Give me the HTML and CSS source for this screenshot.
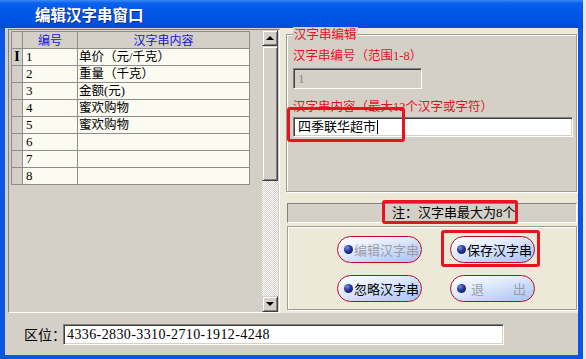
FILE: index.html
```html
<!DOCTYPE html>
<html>
<head>
<meta charset="utf-8">
<link rel="stylesheet" href="styles.css">
</head>
<body>
<div class="window">
  <div class="titlebar"><span class="title">编辑汉字串窗口</span></div>
  <div class="client">
    <div class="top">
      <div class="gridpanel">
        <div class="grid">
          <div class="cell hd"></div><div class="cell hd blue">编号</div><div class="cell hd blue">汉字串内容</div>
          <div class="cell ind"><span class="ibeam">I</span></div><div class="cell num">1</div><div class="cell txt">单价（元/千克）</div>
          <div class="cell ind"></div><div class="cell num">2</div><div class="cell txt">重量（千克）</div>
          <div class="cell ind"></div><div class="cell num">3</div><div class="cell txt">金额(元)</div>
          <div class="cell ind"></div><div class="cell num">4</div><div class="cell txt">蜜欢购物</div>
          <div class="cell ind"></div><div class="cell num">5</div><div class="cell txt">蜜欢购物</div>
          <div class="cell ind"></div><div class="cell num">6</div><div class="cell txt"></div>
          <div class="cell ind"></div><div class="cell num">7</div><div class="cell txt"></div>
          <div class="cell ind"></div><div class="cell num">8</div><div class="cell txt"></div>
        </div>
        <div class="vscroll">
          <div class="sbtn"><span class="arrow-up"></span></div>
          <div class="sbtn thumb"></div>
          <div class="track"></div>
          <div class="sbtn"><span class="arrow-down"></span></div>
        </div>
      </div>
      <div class="right">
        <div class="group">
          <div class="legend">汉字串编辑</div>
          <div class="lbl first">汉字串编号（范围1-8）</div>
          <div class="field disabled">1</div>
          <div class="lbl second">汉字串内容（最大12个汉字或字符）</div>
          <div class="field text">四季联华超市<span class="caret"></span></div>
        </div>
        <div class="note">注：汉字串最大为8个</div>
        <div class="btnpanel">
          <div class="btn off"><span class="ball"></span>编辑汉字串</div>
          <div class="btn"><span class="ball"></span>保存汉字串</div>
          <div class="btn"><span class="ball"></span>忽略汉字串</div>
          <div class="btn off"><span class="ball"></span><span class="t1">退</span><span class="t2">出</span></div>
        </div>
      </div>
    </div>
    <div class="bottom">
      <span class="qlabel">区位：</span>
      <div class="field qinput">4336-2830-3310-2710-1912-4248</div>
    </div>
  </div>
</div>
<div class="mark mark-content"></div>
<div class="mark mark-note"></div>
<div class="mark mark-save"></div>
</body>
</html>
```

FILE: styles.css
```css
* { box-sizing: border-box; }
html, body { margin: 0; padding: 0; }
body {
  width: 586px; height: 359px; overflow: hidden; position: relative;
  background: #ece9d8;
  font-family: "Liberation Serif", "Noto Sans CJK SC", serif;
  font-size: 12px; color: #000;
}
.window {
  width: 583px; height: 359px;
  background: #0a55e6;
  padding: 0 5px 4px 5px;
  display: flex; flex-direction: column;
}
.titlebar {
  height: 28px; margin: 0 -5px; padding-left: 35px;
  background: linear-gradient(#3b8cf8 0px, #0c61ec 3px, #0457e9 10px, #0052e2 22px, #004bd8 28px);
  display: flex; align-items: center;
}
.title {
  color: #fff; font-family: "Noto Sans CJK SC", sans-serif; font-weight: bold;
  font-size: 15.5px; line-height: 18px; text-shadow: 1px 1px #0a2a8a;
}
.client { flex: 1; background: #d4d0c8; display: flex; flex-direction: column; }
.top { height: 285px; display: flex; }

/* grid panel */
.gridpanel {
  margin: 1px 0 0 3px; width: 272px; height: 284px;
  border: 1px solid; border-color: #808080 #fff #fff #808080;
  display: flex; padding: 0 1px 0 2px;
}
.grid {
  margin-top: 1px; align-self: flex-start;
  display: grid; grid-template-columns: 10px 54px 171px; grid-auto-rows: 16px;
  gap: 1px; background: #8e8e8e; border: 1px solid #8e8e8e;
}
.cell { background: #fbfbf2; height: 16px; line-height: 16px; white-space: nowrap; }
.hd, .ind { background: #d4d0c8; }
.blue {
  color: #1515e0; text-align: center;
  font-family: "Noto Sans CJK SC", sans-serif; font-size: 12px; line-height: 16px;
}
.num { padding-left: 3px; font-size: 13px; }
.txt { padding-left: 1px; font-size: 12.5px; line-height: 16px; }
.ibeam { display: block; text-align: center; font-weight: bold; font-size: 14px; line-height: 16px; }

.vscroll { margin-left: auto; width: 16px; display: flex; flex-direction: column; }
.sbtn {
  height: 16px; background: #d4d0c8;
  border: 1px solid; border-color: #d4d0c8 #404040 #404040 #d4d0c8;
  box-shadow: inset 1px 1px #fff, inset -1px -1px #808080;
  display: flex; align-items: center; justify-content: center;
}
.thumb { height: 135px; }
.track {
  flex: 1;
  background: repeating-conic-gradient(#ffffff 0 25%, #d4d0c8 0 50%) 0 0 / 2px 2px;
}
.arrow-up { width: 0; height: 0; border-left: 4px solid transparent; border-right: 4px solid transparent; border-bottom: 4px solid #000; }
.arrow-down { width: 0; height: 0; border-left: 4px solid transparent; border-right: 4px solid transparent; border-top: 4px solid #000; }

/* right side */
.right {
  flex: 1; background: #ece9d8;
  padding: 6px 1px 0 6px;
  display: flex; flex-direction: column;
}
.group {
  height: 158px;
  border: 1px solid #a09c94;
  box-shadow: inset 1px 1px #fff, 1px 1px #fff;
  background: #d4d0c8;
  padding: 0 0 0 6px;
}
.legend {
  margin: -8px 0 0 0; width: fit-content; padding: 0 1px;
  background: #d4d0c8; color: #e8101e; font-size: 12.5px; line-height: 14px;
  font-family: "Noto Sans CJK SC", sans-serif;
}
.lbl { color: #e8101e; font-size: 12.5px; line-height: 14px; white-space: nowrap; }
.lbl.first { margin-top: 8px; }
.lbl.second { margin-top: 11px; }
.field {
  background: #fff;
  border: 1px solid; border-color: #808080 #fff #fff #808080;
  box-shadow: inset 1px 1px #404040, inset -1px -1px #d4d0c8;
  white-space: nowrap;
}
.field.disabled {
  margin-top: 5px; width: 129px; height: 21px; background: #d4d0c8;
  color: #8a8a8a; padding-left: 4px; line-height: 19px; font-size: 13px;
}
.field.text {
  margin-top: 3px; width: 280px; height: 20px;
  padding-left: 4px; line-height: 18px; font-size: 13px;
  display: flex; align-items: center;
}
.caret { display: inline-block; width: 1px; height: 14px; background: #000; margin-left: 1px; }

.note {
  margin: 11px 0 0 1px; width: 290px; height: 20px;
  background: #d4d0c8;
  border: 1px solid; border-color: #808080 #fff #fff #808080;
  padding-left: 104px; line-height: 18px; font-size: 13px;
}
.btnpanel {
  margin: 3px 0 0 1px; width: 290px; height: 84px;
  border: 1px solid #a09c94; box-shadow: inset 1px 1px #fff, 1px 1px #fff;
  background: #ece9d8;
  display: grid; grid-template-columns: 85px 85px; grid-template-rows: 27px 27px;
  column-gap: 28px; row-gap: 12px;
  padding: 9px 0 0 49px;
}
.btn {
  border: 1px solid #b80c1c; border-radius: 14px;
  background: linear-gradient(165deg, #ffffff 0%, #e6eefc 35%, #bcd2f7 75%, #a6c3f4 100%);
  display: flex; align-items: center; padding-left: 6px;
  font-family: "Noto Sans CJK SC", sans-serif; font-size: 13px; line-height: 16px;
  white-space: nowrap;
}
.btn.off { color: #9c9ca6; }
.ball {
  flex: none; width: 9px; height: 9px; border-radius: 50%; margin-right: 1px;
  background: radial-gradient(circle at 35% 30%, #7d8ee0 0, #23339a 45%, #0a1258 100%);
}
.t1 { margin-left: 4px; }
.t2 { margin-left: 29px; }

/* bottom */
.bottom { flex: 1; display: flex; align-items: center; padding: 0 0 0 19px; }
.qlabel {
  width: 39px; font-family: "Noto Sans CJK SC", sans-serif; font-size: 14px; white-space: nowrap;
}
.qinput {
  width: 441px; height: 21px; margin-top: 1px;
  padding-left: 3px; line-height: 19px; font-size: 14px; letter-spacing: 0.4px;
}

/* red annotation marks */
.mark { position: absolute; border: 3px solid #e5141f; border-radius: 3px; }
.mark-content { left: 287px; top: 107px; width: 118px; height: 35px; }
.mark-note { left: 382px; top: 200px; width: 136px; height: 24px; }
.mark-save { left: 441px; top: 230px; width: 99px; height: 37px; }
```
